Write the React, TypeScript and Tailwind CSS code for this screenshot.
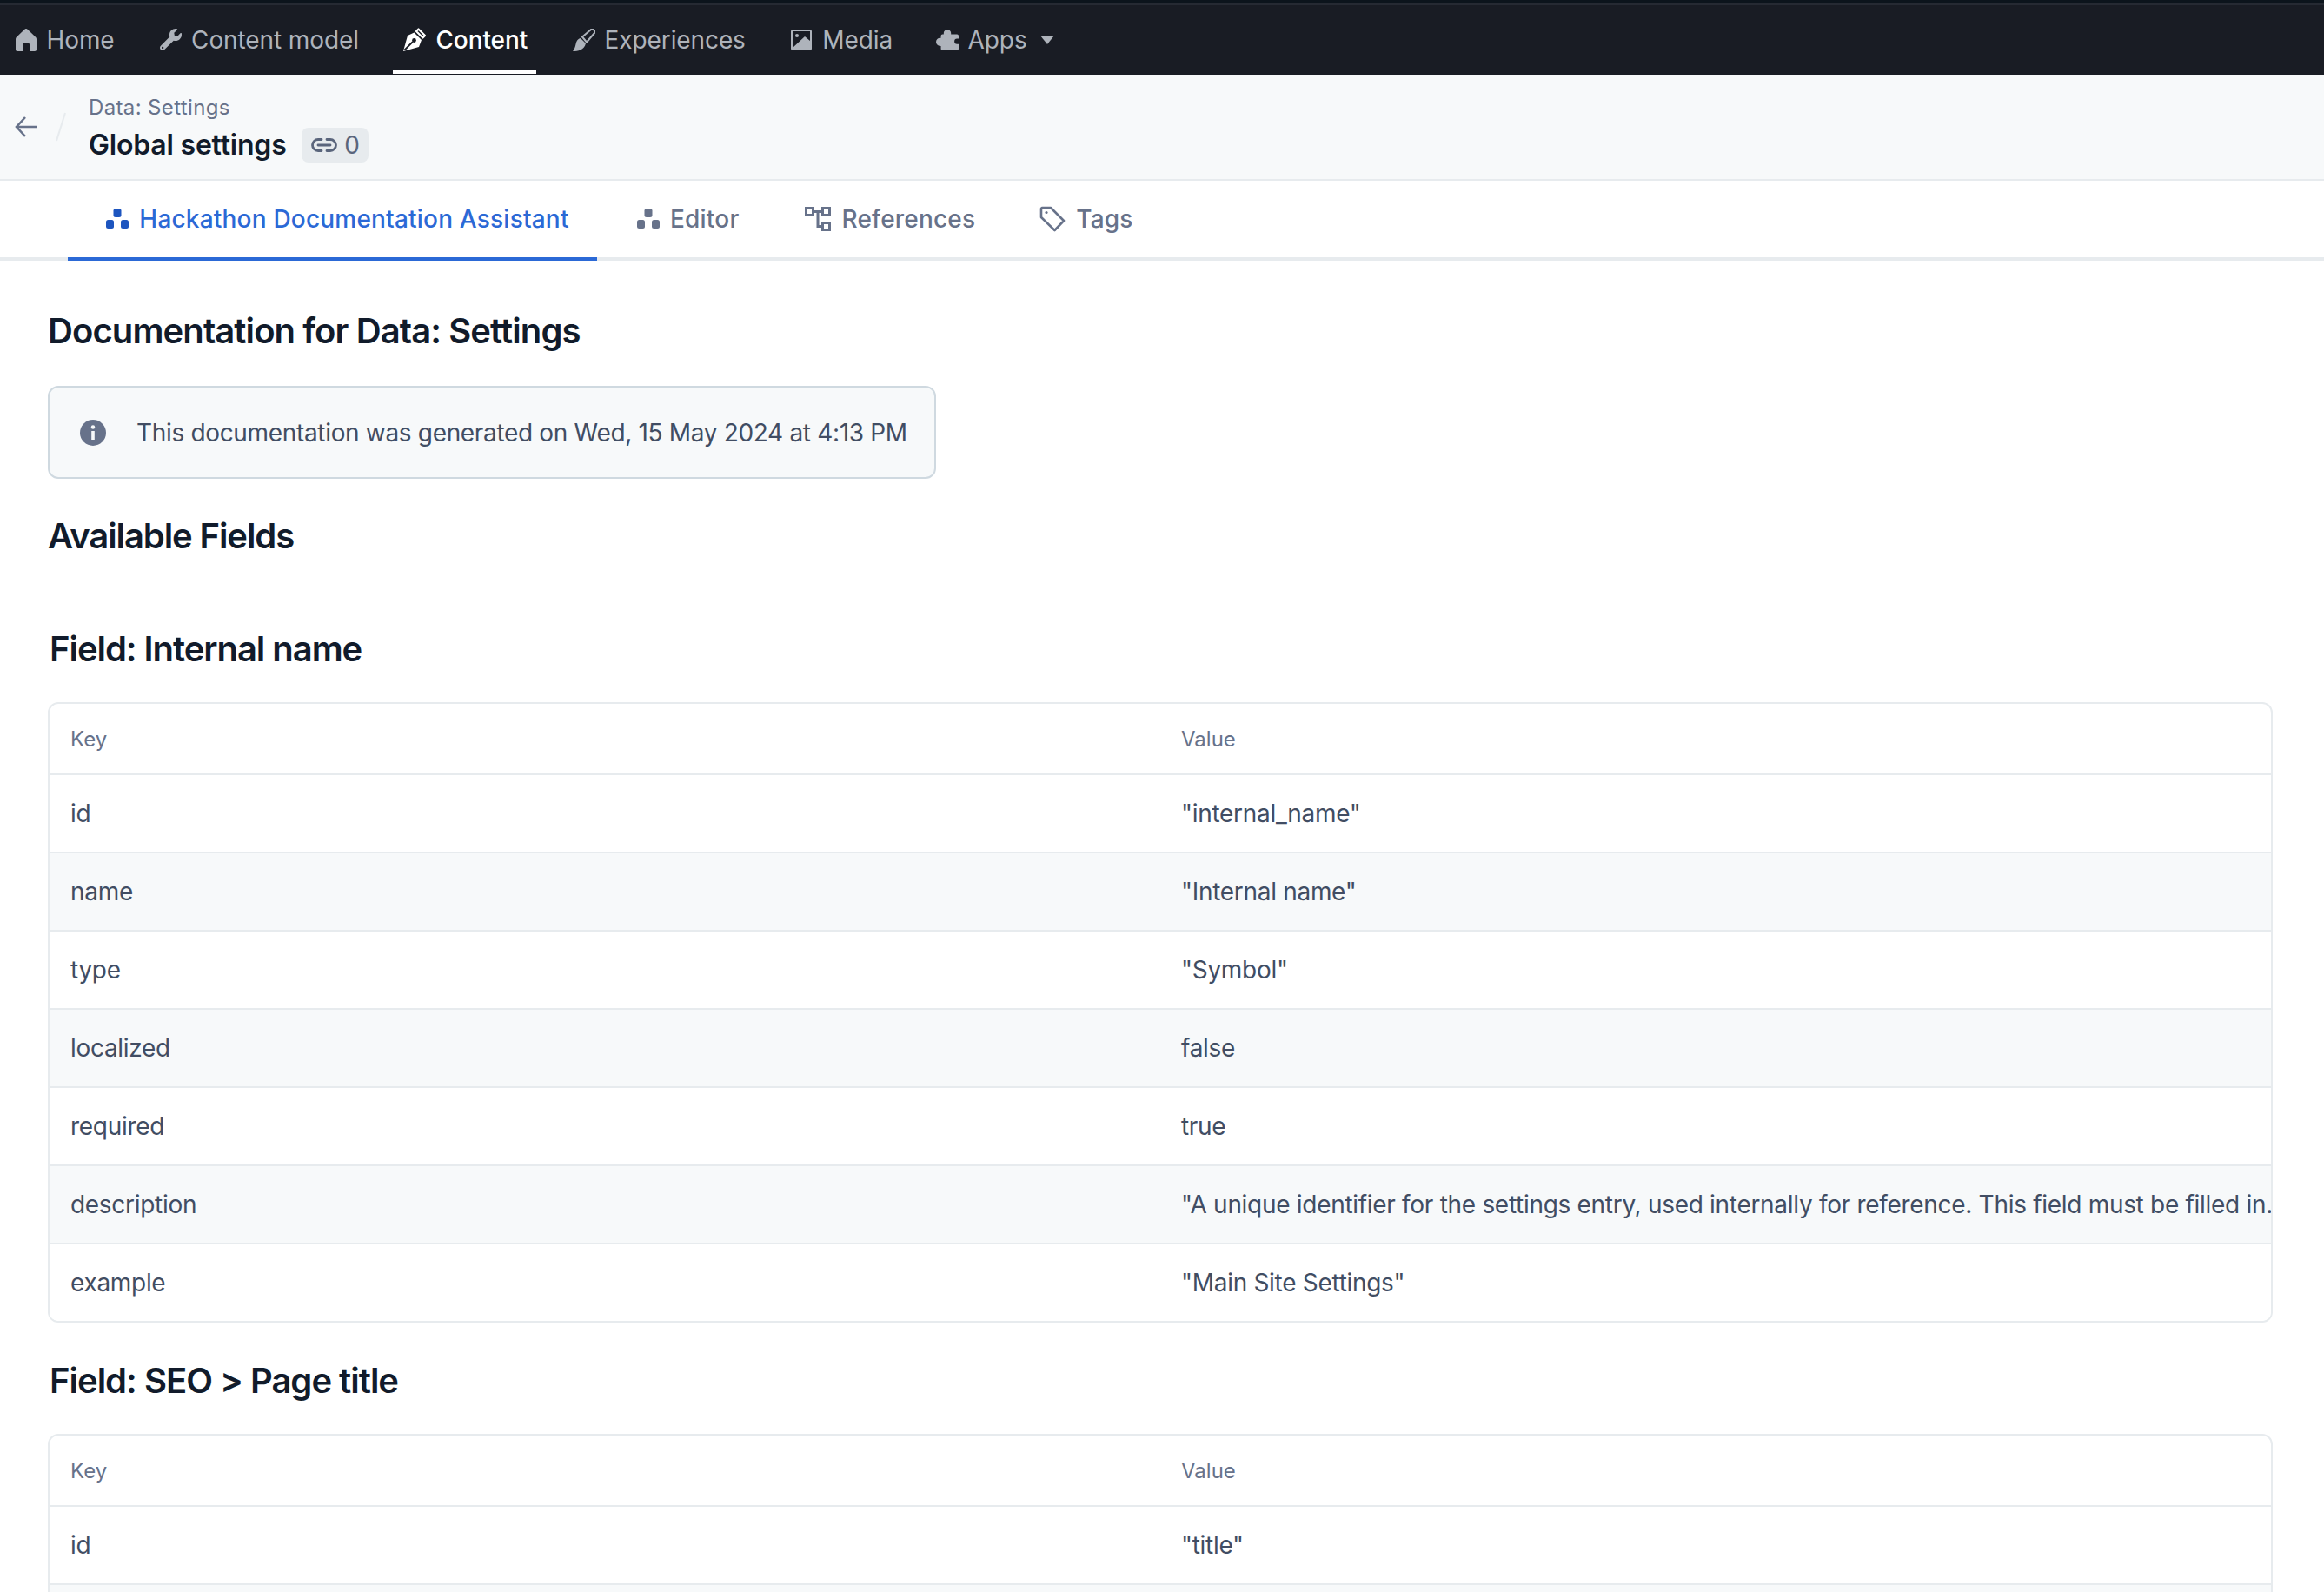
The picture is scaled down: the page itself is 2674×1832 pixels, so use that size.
import type { ReactNode } from "react";
import { FaWrench } from "react-icons/fa";

const font = "font-['Inter','Liberation_Sans',sans-serif]";

const HomeIcon = () => (
  <svg width="24" height="26" viewBox="0 0 24 26" fill="currentColor">
    <path d="M10.6.6a2 2 0 0 1 2.8 0l9.6 9.2a3 3 0 0 1 1 2.2V24a2 2 0 0 1-2 2h-6v-8a1 1 0 0 0-1-1H9a1 1 0 0 0-1 1v8H2a2 2 0 0 1-2-2V12a3 3 0 0 1 1-2.2z" />
  </svg>
);

const PenIcon = () => (
  <svg width="26" height="27" viewBox="0 0 26 27">
    <path d="M17.5 1.5 25 9l-2.5 2.5L15 4z" fill="none" stroke="currentColor" strokeWidth="2.2" strokeLinejoin="round" />
    <path d="M12.5 5.5 21 14l-3 8L0 27 5 9z" fill="currentColor" />
    <path d="M1.5 25.5 11 16" stroke="#191c24" strokeWidth="1.8" />
    <circle cx="12.5" cy="14.5" r="2.4" fill="#191c24" />
  </svg>
);

const BrushIcon = () => (
  <svg width="26" height="26" viewBox="0 0 26 26" fill="currentColor">
    <path d="M9 11C4 12 4 17 3 20c-.8 3-2 5-3 6 6 0 13-1 15-9z" />
    <path d="M11 9.5 21 1a3 3 0 0 1 4 4l-9 10.5z" fill="none" stroke="currentColor" strokeWidth="2" strokeLinejoin="round" />
  </svg>
);

const PuzzleIcon = () => (
  <svg width="28" height="26" viewBox="0 0 28 26" fill="currentColor">
    <path d="M14 0a4.500 4.500 0 0 1 4.500 4.500V6H26a2 2 0 0 1 2 2v3.500h-2a3 3 0 0 0 0 6.500h2v6a2 2 0 0 1-2 2H8a2 2 0 0 1-2-2v-3.500H5a5 5 0 0 1 0-10h1V8a2 2 0 0 1 2-2h1.500V4.500A4.500 4.500 0 0 1 14 0z" />
  </svg>
);

const MediaIcon = () => (
  <svg width="24" height="24" viewBox="0 0 24 24" fill="currentColor">
    <path fillRule="evenodd" d="M2 0h20a2 2 0 0 1 2 2v20a2 2 0 0 1-2 2H2a2 2 0 0 1-2-2V2a2 2 0 0 1 2-2zm0 2v19L16 8l6 5V2z" />
    <circle cx="7" cy="7" r="2" />
  </svg>
);

const DotsIcon = ({ className }: { className: string }) => (
  <svg width="26" height="24" viewBox="0 0 26 24" fill="currentColor" className={className}>
    <rect x="8.5" y="0" width="9" height="10" rx="2.5" />
    <rect x="0" y="13" width="9" height="10" rx="2.5" />
    <rect x="17" y="13" width="9" height="10" rx="2.500" />
  </svg>
);

const ReferencesIcon = () => (
  <svg width="30" height="28" viewBox="0 0 30 28" fill="none" stroke="#67728a" strokeWidth="3">
    <rect x="1.5" y="1.5" width="8" height="8" />
    <rect x="20.5" y="1.5" width="8" height="8" />
    <rect x="20.5" y="18.500" width="8" height="8" />
    <path d="M10 5.500h10M15 5.500V22.500h5" />
  </svg>
);

const TagIcon = () => (
  <svg width="30" height="30" viewBox="0 0 30 30" fill="none" stroke="#67728a" strokeWidth="2.6" strokeLinejoin="round">
    <path d="M3 2h10l15 15-10.500 11L2 13V3z" />
    <circle cx="8" cy="7.500" r="1.600" fill="#67728a" stroke="none" />
  </svg>
);

const LinkIcon = () => (
  <svg width="30" height="18" viewBox="0 0 30 18" fill="none" stroke="#5a657c" strokeWidth="2.8" strokeLinecap="round">
    <path d="M12 2.500H8a6.500 6.500 0 0 0 0 13h4M18 2.500h4a6.500 6.500 0 0 1 0 13h-4M8 9h14" />
  </svg>
);

const navItems: { label: string; icon: ReactNode; active?: boolean; caret?: boolean }[] = [
  { label: "Home", icon: <HomeIcon /> },
  { label: "Content model", icon: <FaWrench size={25} /> },
  { label: "Content", icon: <PenIcon />, active: true },
  { label: "Experiences", icon: <BrushIcon /> },
  { label: "Media", icon: <MediaIcon /> },
  { label: "Apps", icon: <PuzzleIcon />, caret: true },
];

const TopNav = () => (
  <nav className="h-[86px] bg-[#191c24] flex flex-col">
    <div className="h-1 bg-[#0c141c]" />
    <div className="h-[2px] bg-[#262a33]" />
    <div className="flex-1 flex items-stretch pl-[4.5px] gap-[29.5px] tracking-[-0.1px]">
      {navItems.map((item) => (
        <div
          key={item.label}
          className={`flex items-center gap-[11px] pl-3 pr-[10px] mb-px pt-[4px] border-b-4 ${
            item.active ? "border-white text-white font-medium" : "border-transparent text-[#aeb3bb]"
          } ${item.caret ? "-ml-[2px]" : ""}`}
        >
          <span className="w-[26px] flex justify-center">{item.icon}</span>
          <span>{item.label}</span>
          {item.caret && (
            <span className="ml-1 w-0 h-0 border-x-[8px] border-x-transparent border-t-[10px] border-t-[#aeb3bb]" />
          )}
        </div>
      ))}
    </div>
  </nav>
);

const Breadcrumb = () => (
  <header className="h-[122px] bg-[#f7f9fa] border-b-2 border-[#e7ebee] flex items-center">
    <svg width="26" height="26" viewBox="0 0 26 26" fill="none" stroke="#67728a" strokeWidth="2.6" className="ml-[17px]">
      <path d="M25 13H2M12 2 2 13l10 11" />
    </svg>
    <svg width="12" height="34" viewBox="0 0 12 34" className="ml-[21px]" fill="none" stroke="#e7ebee" strokeWidth="2">
      <path d="M11 1 1 33" />
    </svg>
    <div className="ml-[26px] flex flex-col">
      <span className="text-2xl leading-9 tracking-[0.36px] text-[#67728a]">Data: Settings</span>
      <div className="flex items-center gap-[17px] mt-[5px]">
        <span className="text-[32px] leading-10 tracking-[-0.2px] font-semibold text-[#111b2b]">Global settings</span>
        <span className="h-10 w-[77px] rounded-lg bg-[#e7ebee] flex items-center justify-center gap-[8px] pl-[2px] text-[#5a657c]">
          <LinkIcon />0
        </span>
      </div>
    </div>
  </header>
);

const tabs: { label: string; icon: ReactNode; active?: boolean; className: string }[] = [
  { label: "Hackathon Documentation Assistant", icon: <DotsIcon className="text-[#1d55bf]" />, active: true, className: "w-[609px] ml-[78px] pl-[12px]" },
  { label: "Editor", icon: <DotsIcon className="text-[#67728a]" />, className: "ml-[46px]" },
  { label: "References", icon: <ReferencesIcon />, className: "ml-[76px]" },
  { label: "Tags", icon: <TagIcon />, className: "ml-[74px]" },
];

const Tabs = () => (
  <div className="h-[92px] border-b-4 border-[#e7ebee] flex">
    {tabs.map((tab) => (
      <div
        key={tab.label}
        className={`${tab.className} flex items-center justify-center gap-3 font-medium tracking-[0.2px] -mb-1 border-b-4 ${
          tab.active ? "border-[#2b69d6] text-[#2b69d6]" : "border-transparent text-[#67728a]"
        }`}
      >
        {tab.icon}
        <span>{tab.label}</span>
      </div>
    ))}
  </div>
);

const FieldTable = ({ rows }: { rows: [string, string][] }) => (
  <div className="border-2 border-[#e7ebee] rounded-xl overflow-hidden">
    <div className="grid grid-cols-2 h-[80px] pt-[2px] items-center text-2xl text-[#67728a]">
      <span className="pl-6">Key</span>
      <span className="pl-6">Value</span>
    </div>
    {rows.map(([key, value], i) => (
      <div
        key={key}
        className={`grid grid-cols-2 h-[90px] items-center border-t-2 border-[#e7ebee] text-[#414d63] tracking-[-0.3px] ${
          i % 2 === 1 ? "bg-[#f7f9fa]" : "bg-white"
        }`}
      >
        <span className="pl-6">{key}</span>
        <span className="pl-6 whitespace-nowrap">{value}</span>
      </div>
    ))}
  </div>
);

const heading = "text-[40px] leading-[50px] font-semibold text-[#111b2b]";

const App = () => (
  <div className={`${font} h-screen overflow-hidden bg-white text-[28px] leading-10`}>
    <TopNav />
    <Breadcrumb />
    <Tabs />
    <main className="pl-[55px] pr-[59px]">
      <h1 className={`mt-[56px] tracking-[-0.9px] ${heading}`}>Documentation for Data: Settings</h1>
      <div className="mt-[38px] w-[1022px] h-[107px] border-2 border-[#cfd9e0] rounded-xl bg-[#f7f9fa] flex items-center pl-[35px] gap-[35px] text-[#414d63] tracking-[-0.33px]">
        <svg width="30" height="30" viewBox="0 0 30 30">
          <circle cx="15" cy="15" r="15" fill="#67728a" />
          <rect x="13.200" y="13" width="3.600" height="10" fill="#f7f9fa" />
          <circle cx="15" cy="8.500" r="2.200" fill="#f7f9fa" />
        </svg>
        <span>This documentation was generated on Wed, 15 May 2024 at 4:13 PM</span>
      </div>
      <h2 className={`mt-[41px] tracking-[-1.1px] ${heading}`}>Available Fields</h2>
      <h3 className={`mt-20 ml-0.5 tracking-[-1.05px] ${heading}`}>Field: Internal name</h3>
      <div className="mt-9">
        <FieldTable
          rows={[
            ["id", '"internal_name"'],
            ["name", '"Internal name"'],
            ["type", '"Symbol"'],
            ["localized", "false"],
            ["required", "true"],
            ["description", '"A unique identifier for the settings entry, used internally for reference. This field must be filled in."'],
            ["example", '"Main Site Settings"'],
          ]}
        />
      </div>
      <h3 className={`mt-[42px] ml-0.5 tracking-[-1px] ${heading}`}>Field: SEO &gt; Page title</h3>
      <div className="mt-9">
        <FieldTable
          rows={[
            ["id", '"title"'],
            ["name", '"SEO > Page title"'],
          ]}
        />
      </div>
    </main>
  </div>
);

export default App;
